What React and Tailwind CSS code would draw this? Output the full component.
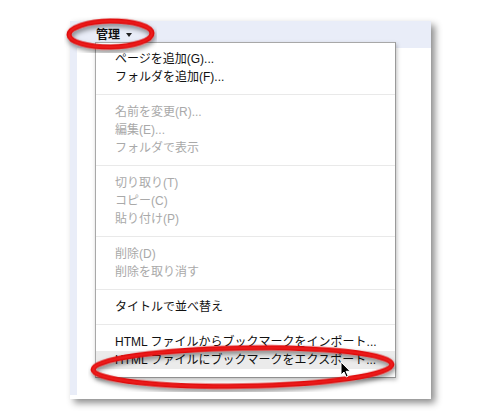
const FONT = { fontFamily: '"Liberation Sans", "Noto Sans CJK JP", sans-serif' };

const GROUPS = [
  [
    { label: 'ページを追加(G)...' },
    { label: 'フォルダを追加(F)...' },
  ],
  [
    { label: '名前を変更(R)...', disabled: true },
    { label: '編集(E)...', disabled: true },
    { label: 'フォルダで表示', disabled: true },
  ],
  [
    { label: '切り取り(T)', disabled: true },
    { label: 'コピー(C)', disabled: true },
    { label: '貼り付け(P)', disabled: true },
  ],
  [
    { label: '削除(D)', disabled: true },
    { label: '削除を取り消す', disabled: true },
  ],
  [{ label: 'タイトルで並べ替え' }],
  [
    { label: 'HTML ファイルからブックマークをインポート...' },
    { label: 'HTML ファイルにブックマークをエクスポート...', active: true },
  ],
];

function MenuItem({ label, disabled, active }) {
  return (
    <div
      className={`h-[18px] flex items-center pl-[19px] text-[12px] leading-[18px] whitespace-nowrap
        ${disabled ? 'text-[#a9a9a9]' : 'text-[#111]'}
        ${active ? 'bg-[#ebebeb]' : ''}`}
    >
      {label}
    </div>
  );
}

function Ellipse({ className, w, h }) {
  const cx = w / 2;
  const cy = h / 2;
  return (
    <svg className={className} width={w} height={h} viewBox={`0 0 ${w} ${h}`}>
      <defs>
        <filter id={`sh${w}`} x="-10%" y="-40%" width="120%" height="180%">
          <feDropShadow dx="1" dy="3" stdDeviation="2.5" floodColor="#000" floodOpacity="0.5" />
        </filter>
        <filter id={`gl${w}`} x="-10%" y="-40%" width="120%" height="180%">
          <feGaussianBlur stdDeviation="0.8" />
        </filter>
      </defs>
      <g transform={`rotate(-1 ${cx} ${cy})`}>
        <ellipse cx={cx} cy={cy} rx={cx - 5} ry={cy - 6} fill="none" stroke="#d90000" strokeWidth="5" filter={`url(#sh${w})`} />
        <ellipse cx={cx} cy={cy} rx={cx - 5} ry={cy - 6} fill="none" stroke="#ff3a3a" strokeWidth="1.6" filter={`url(#gl${w})`} />
      </g>
    </svg>
  );
}

export default function App() {
  return (
    <div className="relative w-[500px] h-[420px] bg-white overflow-hidden" style={FONT}>
      <div className="pl-[70px] pt-[21px]">
        <div className="relative w-[361px] h-[378px] bg-white flex flex-col shadow-[4px_4px_7px_rgba(0,0,0,0.45)]">
          {/* Toolbar band */}
          <div className="h-[27px] bg-[#e9edf8] flex items-center pl-[26px] text-[12px] font-bold text-[#111]">
            <span>管理</span>
            <svg className="ml-[6px]" width="6" height="4" viewBox="0 0 6 4">
              <path d="M0 0h6L3 4z" fill="#222" />
            </svg>
          </div>
          <div className="flex-1 flex">
            <div className="w-[7px] mb-[4px] bg-[#e9edf8]" />
            <div className="flex-1" />
          </div>

          {/* Dropdown menu */}
          <div className="absolute left-[25px] top-[21px] w-[301px] bg-white border border-[#a8a8a8] border-r-[#9a9a9a] border-b-[#8f8f8f] pt-[7px] pb-[8px] shadow-[1px_2px_4px_rgba(0,0,0,0.25)]">
            {GROUPS.map((group, gi) => (
              <div key={gi}>
                {gi > 0 && <div className="my-[8px] h-px bg-[#e9e9e9]" />}
                {group.map(item => (
                  <MenuItem key={item.label} {...item} />
                ))}
              </div>
            ))}
          </div>
        </div>
      </div>

      {/* Annotation ellipses */}
      <Ellipse className="absolute left-[64px] top-[15px]" w={93} h={38} />
      <Ellipse className="absolute left-[88px] top-[342px]" w={309} h={50} />

      {/* Mouse cursor */}
      <svg className="absolute left-[340px] top-[361px]" width="12" height="18" viewBox="0 0 12 18">
        <path
          d="M1 1v13l3-3 2.2 5 2-0.9L6 10.3h4.2z"
          fill="#000"
          stroke="#fff"
          strokeWidth="1"
          strokeLinejoin="round"
        />
      </svg>
    </div>
  );
}
